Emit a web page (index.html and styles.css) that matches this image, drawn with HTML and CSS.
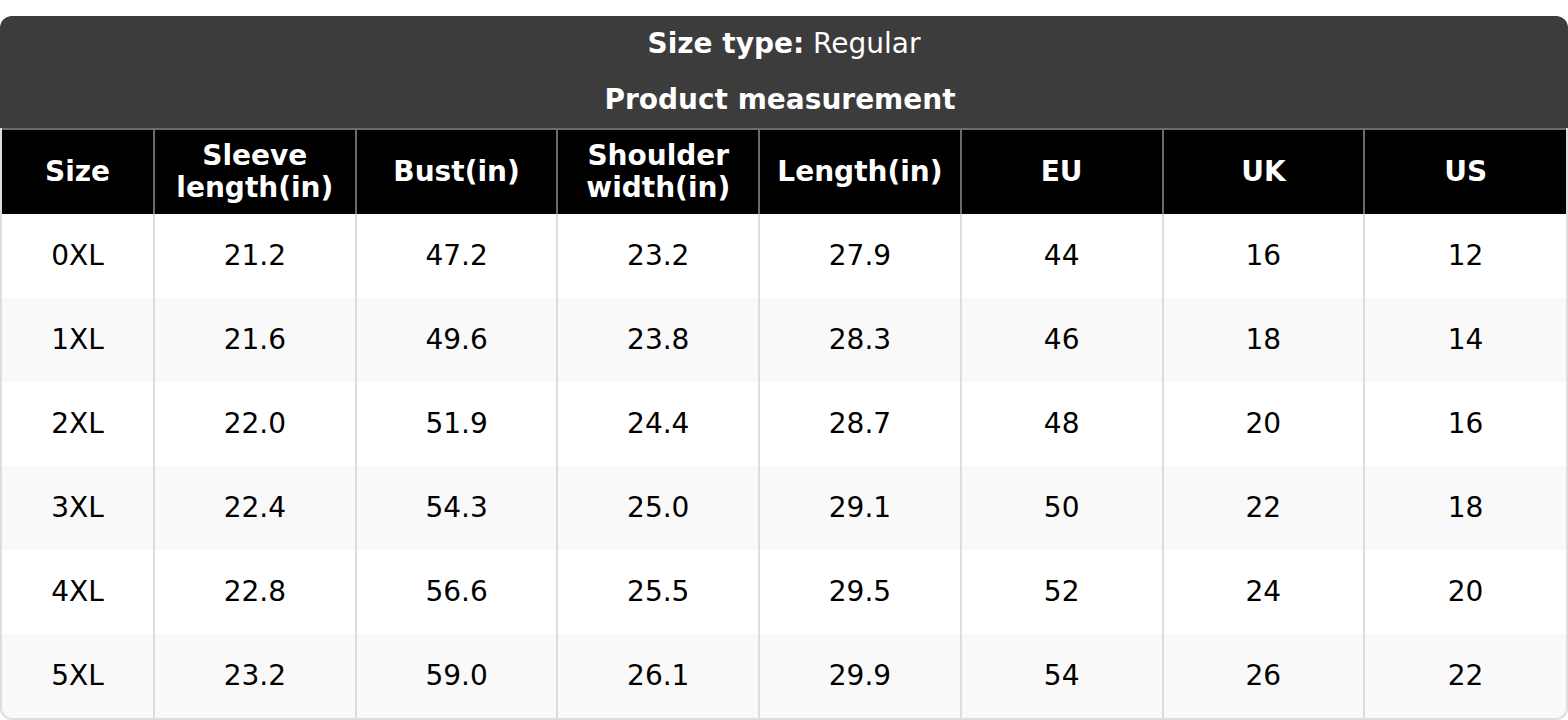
FILE: index.html
```html
<!DOCTYPE html>
<html>
<head>
<meta charset="utf-8">
<link rel="stylesheet" href="styles.css">
</head>
<body>
<div class="chart">
  <div class="caption">
    <div class="cap-line"><strong>Size type:</strong> Regular</div>
    <div class="cap-line cap-title"><strong>Product measurement</strong></div>
  </div>
  <div class="table-wrap">
    <table class="size-table">
      <colgroup>
        <col class="col-first">
        <col><col><col><col><col><col><col>
      </colgroup>
      <thead>
        <tr>
          <th>Size</th>
          <th>Sleeve<br>length(in)</th>
          <th>Bust(in)</th>
          <th>Shoulder<br>width(in)</th>
          <th>Length(in)</th>
          <th>EU</th>
          <th>UK</th>
          <th>US</th>
        </tr>
      </thead>
      <tbody>
        <tr><td>0XL</td><td>21.2</td><td>47.2</td><td>23.2</td><td>27.9</td><td>44</td><td>16</td><td>12</td></tr>
        <tr><td>1XL</td><td>21.6</td><td>49.6</td><td>23.8</td><td>28.3</td><td>46</td><td>18</td><td>14</td></tr>
        <tr><td>2XL</td><td>22.0</td><td>51.9</td><td>24.4</td><td>28.7</td><td>48</td><td>20</td><td>16</td></tr>
        <tr><td>3XL</td><td>22.4</td><td>54.3</td><td>25.0</td><td>29.1</td><td>50</td><td>22</td><td>18</td></tr>
        <tr><td>4XL</td><td>22.8</td><td>56.6</td><td>25.5</td><td>29.5</td><td>52</td><td>24</td><td>20</td></tr>
        <tr><td>5XL</td><td>23.2</td><td>59.0</td><td>26.1</td><td>29.9</td><td>54</td><td>26</td><td>22</td></tr>
      </tbody>
    </table>
  </div>
</div>
</body>
</html>
```

FILE: styles.css
```css
html, body {
  margin: 0;
  padding: 0;
  background: #ffffff;
}
body {
  padding-top: 16px;
  font-family: "DejaVu Sans", Verdana, sans-serif;
  font-size: 28px;
  color: #000;
}
.chart {
  width: 1568px;
}
.caption {
  background: #3c3c3c;
  color: #ffffff;
  border-radius: 12px 12px 0 0;
  text-align: center;
}
.cap-line {
  height: 56px;
  line-height: 56px;
}
.cap-title {
  padding-right: 8px;
}
.cap-line strong {
  font-weight: bold;
}
.table-wrap {
  border: 2px solid #dddddd;
  border-top: none;
  border-radius: 0 0 12px 12px;
  overflow: hidden;
}
.size-table {
  width: 100%;
  border-collapse: collapse;
  table-layout: fixed;
}
.col-first {
  width: 152px;
}
.size-table th {
  background: #000;
  color: #fff;
  font-weight: bold;
  line-height: 32px;
  height: 85px;
  padding: 0 6px;
  border-top: 2px solid #6b6b6b;
  border-left: 2px solid #6b6b6b;
  border-right: 2px solid #6b6b6b;
  text-align: center;
  vertical-align: middle;
  box-sizing: border-box;
}
.size-table th:first-child,
.size-table td:first-child {
  border-left: none;
}
.size-table th:last-child,
.size-table td:last-child {
  border-right: none;
}
.size-table td {
  text-align: center;
  line-height: 36px;
  padding: 24px 6px;
  border-left: 2px solid #dddddd;
  border-right: 2px solid #dddddd;
}
.size-table tbody tr:nth-child(even) td {
  background: #f9f9f9;
}
```
